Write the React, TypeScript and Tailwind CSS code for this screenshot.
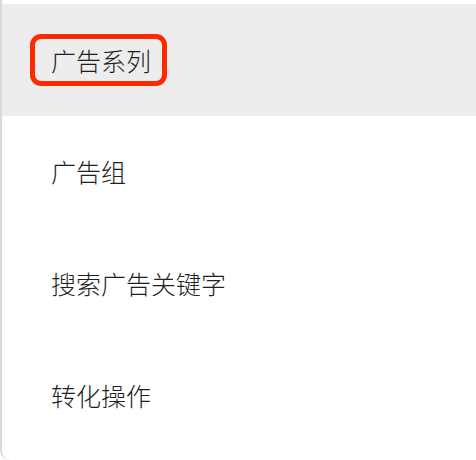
import React from "react";

const items = ["广告系列", "广告组", "搜索广告关键字", "转化操作"];

export default function App() {
  const active = 0;
  return (
    <div className="w-[476px] h-[460px] bg-white overflow-hidden">
      <div
        className="h-full pt-[4px] border-l-2 border-[#dadada] rounded-bl-[10px] text-[#1f1f1f] font-light"
        style={{ fontFamily: '"Noto Sans CJK SC", "Noto Sans", sans-serif' }}
      >
        {items.map((label, i) =>
          i === active ? (
            <div key={label} className="h-[112px] flex items-center pl-[28px] bg-[#ededed]">
              <span className="inline-block border-[5px] border-[#ff2a00] rounded-[11px] pl-[16px] pr-[11px] text-[25px] leading-[42px]">
                {label}
              </span>
            </div>
          ) : (
            <div key={label} className="h-[112px] flex items-center pl-[49px] text-[25px]">
              {label}
            </div>
          )
        )}
      </div>
    </div>
  );
}
